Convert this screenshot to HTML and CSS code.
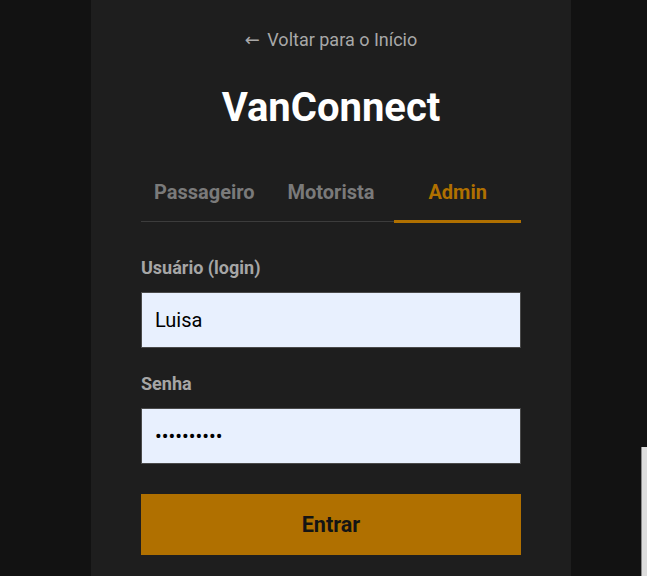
FILE: index.html
```html
<!DOCTYPE html>
<html lang="pt-BR">
<head>
<meta charset="utf-8">
<title>VanConnect - Login</title>
<link rel="stylesheet" href="styles.css">
</head>
<body>
<div class="page">
  <main class="card">
    <a class="back" href="#"><span class="arrow">←</span> Voltar para o Início</a>
    <h1 class="title">VanConnect</h1>
    <nav class="tabs">
      <button class="tab">Passageiro</button>
      <button class="tab">Motorista</button>
      <button class="tab active">Admin</button>
    </nav>
    <form class="form">
      <label class="label" for="user">Usuário (login)</label>
      <input class="input" id="user" type="text" value="Luisa">
      <label class="label" for="pass">Senha</label>
      <input class="input" id="pass" type="password" value="1234567890">
      <button class="submit" type="button">Entrar</button>
    </form>
  </main>
</div>
<div class="edge"></div>
</body>
</html>
```
FILE: styles.css
```css
html, body {
  margin: 0;
  padding: 0;
  background: #121212;
  height: 100%;
  overflow: hidden;
  font-family: Roboto, "Liberation Sans", sans-serif;
}
.page {
  padding-left: 91px;
}
.card {
  width: 480px;
  min-height: 576px;
  box-sizing: border-box;
  background: #1e1e1e;
  padding: 29px 50px 0;
  display: flex;
  flex-direction: column;
}
.back {
  align-self: center;
  color: #a8a8a8;
  text-decoration: none;
  font-size: 18px;
  line-height: 22px;
}
.arrow {
  font-family: "DejaVu Sans", sans-serif;
  margin-right: 3px;
}
.title {
  margin: 33px 0 0;
  text-align: center;
  color: #ffffff;
  font-size: 40px;
  line-height: 48px;
  font-weight: 700;
}
.tabs {
  margin-top: 36px;
  display: flex;
  border-bottom: 1px solid #3c3c3c;
}
.tab {
  flex: 1;
  background: none;
  border: 0;
  border-bottom: 3px solid transparent;
  margin-bottom: -2px;
  padding: 12px 0 16px;
  font-family: inherit;
  font-size: 20px;
  line-height: 24px;
  font-weight: 700;
  color: #7a7a7a;
}
.tab.active {
  color: #b07000;
  border-bottom-color: #b07000;
}
.form {
  display: flex;
  flex-direction: column;
  padding-top: 35px;
}
.label {
  font-size: 18px;
  line-height: 22px;
  font-weight: 700;
  color: #a6a6a6;
  margin-bottom: 13px;
}
.input {
  height: 56px;
  box-sizing: border-box;
  border: 1px solid #4a4a4a;
  background: #e8f0fe;
  padding: 0 13px;
  font-family: inherit;
  font-size: 20px;
  color: #000;
  margin-bottom: 25px;
  outline: none;
}
#pass {
  margin-bottom: 30px;
}
.submit {
  height: 61px;
  border: 0;
  background: #b07000;
  color: #141414;
  font-family: inherit;
  font-size: 21.6px;
  font-weight: 700;
}
.edge {
  position: absolute;
  right: 0;
  top: 447px;
  width: 5px;
  bottom: 0;
  background: #dcdcdc;
  border-left: 1px solid #8a8a8a;
}
```
